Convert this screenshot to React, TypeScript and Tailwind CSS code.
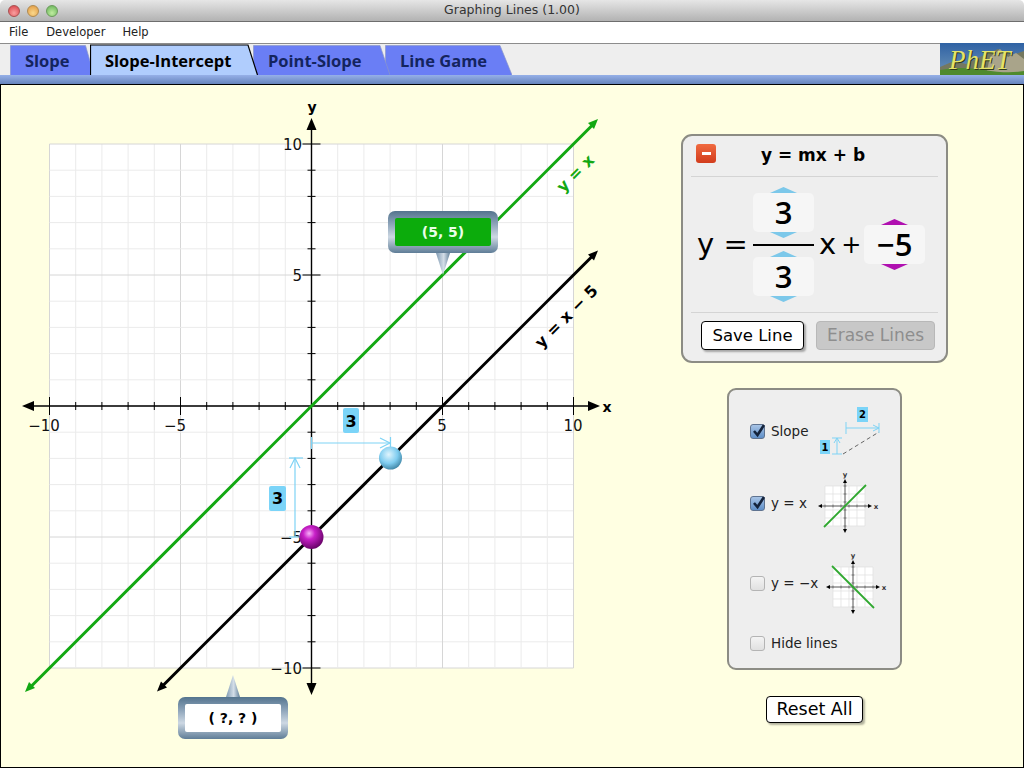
import React from 'react';

const units = Array.from({ length: 21 }, (_, i) => i - 10);
const px = (v: number) => 311.5 + v * 26.2;
const py = (v: number) => 406 - v * 26.2;

function Tab({ label, width, path, active, className }: { label: string; width: number; path: string; active?: boolean; className: string }) {
  return (
    <div className={`relative h-[31px] shrink-0 ${className}`} style={{ width }}>
      <svg className="absolute inset-0" width={width} height={31}>
        <path d={path} fill={active ? '#b0cdfd' : '#6a7ef5'} stroke={active ? '#000' : '#8a96c8'} strokeWidth={active ? 1.2 : 0.7} />
      </svg>
      <span className={`relative block pl-[15px] pt-[7px] text-[16.5px] leading-[20px] font-bold whitespace-nowrap font-['Open_Sans',sans-serif] ${active ? 'text-black' : 'text-[#14245e]'}`}>
        {label}
      </span>
    </div>
  );
}

function PhetLogo() {
  return (
    <svg width={84} height={32} className="shrink-0 -mt-[1px]">
      <defs>
        <linearGradient id="sky" x1="0" y1="0" x2="0" y2="1">
          <stop offset="0" stopColor="#2f62a4" />
          <stop offset="1" stopColor="#6d94b8" />
        </linearGradient>
      </defs>
      <rect width={84} height={32} fill="url(#sky)" />
      <path d="M0 24L14 18L26 21L44 12L58 6L72 12L84 8V32H0Z" fill="#75785f" />
      <path d="M50 14L60 6L68 14L76 10L84 16V32H46Z" fill="#a9a48a" />
      <path d="M0 27Q20 23 44 27T84 28V32H0Z" fill="#4f8a2d" />
      <text x={10} y={27} fontFamily="Liberation Serif" fontStyle="italic" fontSize={27} fill="#2e3a18">PhET</text>
      <text x={9} y={26} fontFamily="Liberation Serif" fontStyle="italic" fontSize={27} fill="#e4e468">PhET</text>
    </svg>
  );
}

function Graph() {
  return (
    <svg width={640} height={683} viewBox="1 85 640 683" className="block">
      <defs>
        <radialGradient id="magenta" cx="0.4" cy="0.35" r="0.7">
          <stop offset="0" stopColor="#f8b0f8" />
          <stop offset="0.35" stopColor="#c820c8" />
          <stop offset="1" stopColor="#600060" />
        </radialGradient>
        <radialGradient id="blue" cx="0.42" cy="0.35" r="0.7">
          <stop offset="0" stopColor="#dff4fd" />
          <stop offset="0.55" stopColor="#80cdf0" />
          <stop offset="1" stopColor="#3a7f9f" />
        </radialGradient>
      </defs>
      <rect x={49.5} y={144} width={524} height={524} fill="#fff" />
      {units.map((v) => (
        <g key={v} stroke={v % 5 === 0 ? '#d6d6d6' : '#ebebeb'} strokeWidth={1}>
          <line x1={px(v)} y1={144} x2={px(v)} y2={668} />
          <line x1={49.5} y1={py(v)} x2={573.5} y2={py(v)} />
        </g>
      ))}

      {/* axes */}
      <g stroke="#000" strokeWidth={1.4}>
        <line x1={30} y1={406} x2={592} y2={406} />
        <line x1={311.5} y1={126} x2={311.5} y2={688} />
        {units.filter((v) => v !== 0).map((v) => {
          const len = v % 5 === 0 ? 9 : 4;
          return (
            <g key={v} strokeWidth={1}>
              <line x1={px(v)} y1={406 - len} x2={px(v)} y2={406 + len} />
              <line x1={311.5 - len} y1={py(v)} x2={311.5 + len} y2={py(v)} />
            </g>
          );
        })}
      </g>
      <polygon points="22,406 34,401 34,411" />
      <polygon points="600,406 588,401 588,411" />
      <polygon points="311.5,118 306.5,130 316.5,130" />
      <polygon points="311.5,695 306.5,683 316.5,683" />
      <g fontSize={15} fill="#111">
        <text x={44} y={431} textAnchor="middle">−10</text>
        <text x={175} y={431} textAnchor="middle">−5</text>
        <text x={442} y={431} textAnchor="middle">5</text>
        <text x={573} y={431} textAnchor="middle">10</text>
        <text x={302} y={150} textAnchor="end">10</text>
        <text x={302} y={281} textAnchor="end">5</text>
        <text x={302} y={543} textAnchor="end">−5</text>
        <text x={302} y={674} textAnchor="end">−10</text>
      </g>
      <text x={607} y={412} textAnchor="middle" fontSize={14} fontWeight="bold">x</text>
      <text x={312} y={112} textAnchor="middle" fontSize={14} fontWeight="bold">y</text>

      {/* lines */}
      <line x1={30} y1={687.5} x2={593} y2={124.5} stroke="#12a812" strokeWidth={3} />
      <polygon points="598,119 588,123 594,129" fill="#12a812" />
      <polygon points="25,692 35,688 29,682" fill="#12a812" />
      <line x1={162} y1={686.5} x2={593} y2={255.5} stroke="#000" strokeWidth={3} />
      <polygon points="598,250.5 588,254.5 594,260.5" />
      <polygon points="157,691.5 167,687.5 161,681.5" />
      <text x={575} y={179} textAnchor="middle" fontSize={16} fontWeight="bold" fill="#12a812" transform="rotate(-45 575 173)">y = x</text>
      <text x={566} y={322} textAnchor="middle" fontSize={16} fontWeight="bold" transform="rotate(-45 566 316)">y = x − 5</text>

      {/* slope indicators */}
      <g stroke="#7ed3f5" strokeWidth={1.2} fill="none">
        <line x1={311.5} y1={437} x2={311.5} y2={449} />
        <line x1={311.5} y1={443} x2={390} y2={443} />
        <line x1={390.5} y1={437} x2={390.5} y2={449} />
        <path d="M380 438L390 443L380 448" />
        <line x1={295} y1={458} x2={295} y2={537} />
        <line x1={289} y1={458} x2={303} y2={458} />
        <line x1={289} y1={537} x2={303} y2={537} />
        <path d="M290 468L295 458L300 468" />
      </g>
      <rect x={343} y={408} width={16} height={25} rx={2} fill="#7bd4f8" />
      <rect x={269} y={486} width={17} height={25} rx={2} fill="#7bd4f8" />
      <text x={351} y={427} textAnchor="middle" fontSize={16} fontWeight="bold">3</text>
      <text x={277.5} y={504} textAnchor="middle" fontSize={16} fontWeight="bold">3</text>

      <circle cx={390.5} cy={458} r={11.5} fill="url(#blue)" />
      <circle cx={311.5} cy={537} r={12} fill="url(#magenta)" />
    </svg>
  );
}

function Bubble({ label, green, up, className }: { label: string; green?: boolean; up?: boolean; className: string }) {
  return (
    <div className={`absolute w-[110px] ${className}`}>
      {up && <Pointer up />}
      <div className="h-[42px] rounded-[7px] p-[7px] bg-[linear-gradient(180deg,#54748e_0%,#8ba2b8_30%,#cdd8e3_62%,#5f7d97_100%)]">
        <div className={`h-full flex items-center justify-center rounded-[2px] text-[14px] font-bold ${green ? 'bg-[#0cac0c] text-[#eaffea]' : 'bg-white text-black'}`}>
          {label}
        </div>
      </div>
      {!up && <Pointer />}
    </div>
  );
}

function Pointer({ up }: { up?: boolean }) {
  return (
    <svg width={14} height={22} viewBox="0 0 14 22" className="block mx-auto">
      <defs>
        <linearGradient id={up ? 'ptrUp' : 'ptrDown'} x1="0" y1="0" x2="1" y2="0">
          <stop offset="0" stopColor="#7f9ab2" />
          <stop offset="0.55" stopColor="#d4dee8" />
          <stop offset="1" stopColor="#62809a" />
        </linearGradient>
      </defs>
      <polygon points={up ? '7,0 0,22 14,22' : '0,0 14,0 7,22'} fill={`url(#${up ? 'ptrUp' : 'ptrDown'})`} />
    </svg>
  );
}

function Chevron({ color, down }: { color: string; down?: boolean }) {
  return (
    <svg width={27} height={6} viewBox="0 0 27 6" className="block mx-auto">
      <polygon points={down ? '0,0 27,0 13.5,6' : '0,6 27,6 13.5,0'} fill={color} />
    </svg>
  );
}

function Spinner({ value, color }: { value: string; color: string }) {
  return (
    <div className="w-[61px]">
      <Chevron color={color} />
      <div className="h-[39px] rounded-[5px] bg-[#f6f6f6] flex items-center justify-center text-[31px] font-semibold leading-none text-black font-['Open_Sans',sans-serif]">
        {value}
      </div>
      <Chevron color={color} down />
    </div>
  );
}

function Check({ checked }: { checked?: boolean }) {
  if (!checked) {
    return <div className="w-[15px] h-[15px] shrink-0 rounded-[3px] border border-[#b4b4b4] bg-[linear-gradient(180deg,#f4f4f4,#e0e0e0)]" />;
  }
  return (
    <div className="relative w-[15px] h-[15px] shrink-0 rounded-[3px] border border-[#5f7390] bg-[linear-gradient(180deg,#a8c4e6,#5f8fc8)]">
      <svg width={17} height={17} viewBox="0 0 17 17" className="absolute left-0 -top-[3px]">
        <path d="M3 9L6.5 13L13 3" fill="none" stroke="#14233c" strokeWidth={2.6} />
      </svg>
    </div>
  );
}

function SlopeIcon() {
  return (
    <svg width={62} height={50} viewBox="820 405 62 50" className="block">
      <g stroke="#7ed3f5" strokeWidth={1} fill="none">
        <line x1={846} y1={427} x2={879} y2={427} />
        <line x1={846} y1={421} x2={846} y2={433} />
        <line x1={879} y1={422} x2={879} y2={432} />
        <path d="M873 424L879 427L873 430" />
        <line x1={837} y1={437} x2={837} y2={453} />
        <line x1={832} y1={437} x2={842} y2={437} />
        <line x1={832} y1={453} x2={842} y2={453} />
        <path d="M834 442L837 437L840 442" />
      </g>
      <line x1={843} y1={453} x2={879} y2={431} stroke="#666" strokeWidth={1} strokeDasharray="4 3" />
      <rect x={857} y={406} width={11} height={15} fill="#7bd4f8" />
      <rect x={820} y={439} width={10} height={14} fill="#7bd4f8" />
      <text x={862.5} y={417} textAnchor="middle" fontSize={10} fontWeight="bold">2</text>
      <text x={825} y={450} textAnchor="middle" fontSize={10} fontWeight="bold">1</text>
    </svg>
  );
}

function MiniGraph({ falling }: { falling?: boolean }) {
  const ticks = [0, 8, 16, 24, 32, 40];
  return (
    <svg width={72} height={72} viewBox="-36 -36 72 72" className="block">
      <rect x={-20} y={-20} width={40} height={40} fill="#fff" />
      {ticks.map((t) => (
        <g key={t}>
          <g stroke="#dedede" strokeWidth={0.7}>
            <line x1={t - 20} y1={-20} x2={t - 20} y2={20} />
            <line x1={-20} y1={t - 20} x2={20} y2={t - 20} />
          </g>
          <g stroke="#666" strokeWidth={0.7}>
            <line x1={t - 20} y1={-1.5} x2={t - 20} y2={1.5} />
            <line x1={-1.5} y1={t - 20} x2={1.5} y2={t - 20} />
          </g>
        </g>
      ))}
      <line x1={-25} y1={0} x2={25} y2={0} stroke="#555" strokeWidth={1} />
      <line x1={0} y1={-25} x2={0} y2={25} stroke="#555" strokeWidth={1} />
      <polygon points="-27,0 -23,-2 -23,2" />
      <polygon points="27,0 23,-2 23,2" />
      <polygon points="0,-27 -2,-23 2,-23" />
      <polygon points="0,27 -2,23 2,23" />
      <text x={31} y={3} fontSize={7} fontWeight="bold" fill="#333" textAnchor="middle">x</text>
      <text x={0} y={-29} fontSize={7} fontWeight="bold" fill="#333" textAnchor="middle">y</text>
      {falling ? (
        <line x1={-21} y1={-21} x2={21} y2={21} stroke="#2fa82f" strokeWidth={1.8} />
      ) : (
        <line x1={-21} y1={21} x2={21} y2={-21} stroke="#2fa82f" strokeWidth={1.8} />
      )}
    </svg>
  );
}

function PushButton({ label, className }: { label: string; className: string }) {
  return (
    <div className={`flex items-center justify-center rounded-[4px] bg-white border border-black text-black shadow-[2px_2px_2px_rgba(0,0,0,0.3)] ${className}`}>
      {label}
    </div>
  );
}

export default function App() {
  return (
    <div className="w-[1024px] h-[768px] flex flex-col overflow-hidden bg-white text-black font-['DejaVu_Sans',sans-serif]">
      {/* title bar */}
      <div className="relative h-[22px] shrink-0 rounded-t-[5px] border-b border-[#6e6e6e] bg-[linear-gradient(180deg,#e6e6e6,#b2b2b2)] flex items-center justify-center">
        <div className="absolute left-[8px] top-[5px] flex gap-[7px]">
          <div className="w-[12px] h-[12px] rounded-full border border-[#a85050] bg-[radial-gradient(circle_at_50%_70%,#f8a0a0,#d83c44)]" />
          <div className="w-[12px] h-[12px] rounded-full border border-[#b08a50] bg-[radial-gradient(circle_at_50%_70%,#fad88c,#e0963c)]" />
          <div className="w-[12px] h-[12px] rounded-full border border-[#6a9a5a] bg-[radial-gradient(circle_at_50%_70%,#c0eca0,#62b054)]" />
        </div>
        <span className="text-[12.5px] text-[#333]">Graphing Lines (1.00)</span>
      </div>

      {/* menu bar */}
      <div className="h-[22px] shrink-0 border-b border-[#8c8c8c] bg-white flex items-center pl-[9px] text-[11.5px] text-[#222]">
        <span>File</span>
        <span className="ml-[18px]">Developer</span>
        <span className="ml-[17px]">Help</span>
      </div>

      {/* tabs */}
      <div className="h-[31px] shrink-0 bg-[#eeeeee] flex justify-between pl-[10px]">
        <div className="flex">
          <Tab label="Slope" width={84} className="z-0" path="M0.5 31V1.5H75.5L84 31" />
          <Tab label="Slope-Intercept" width={168} active className="z-10 -ml-[4px]" path="M0.5 31V1H158L167.5 31" />
          <Tab label="Point-Slope" width={137} className="z-[1] -ml-[5px]" path="M0.5 31V1.5H127L137 31" />
          <Tab label="Line Game" width={127} className="z-0 -ml-[5px]" path="M0.5 31V1.5H115L127 31" />
        </div>
        <PhetLogo />
      </div>
      <div className="h-[9px] shrink-0 bg-[linear-gradient(180deg,#96b0e8,#6684bc)]" />

      {/* play area */}
      <div className="flex-1 flex min-h-0 border border-black bg-[#ffffe2]">
        <div className="relative w-[640px] shrink-0">
          <Graph />
          <Bubble label="(5, 5)" green className="left-[387px] top-[126px]" />
          <Bubble label="( ?, ? )" up className="left-[177px] top-[590px]" />
        </div>

        <div className="w-[267px] ml-[40px] pt-[49px] flex flex-col items-center">
          {/* equation panel */}
          <div className="w-[267px] h-[229px] rounded-[11px] border-2 border-[#8c8c84] bg-[#eeeeee] px-[8px] flex flex-col">
            <div className="relative h-[41px] shrink-0 border-b border-[#d4d4d4] flex items-center justify-center">
              <div className="absolute left-[5px] top-[8px] w-[20px] h-[19px] rounded-[3px] bg-[linear-gradient(180deg,#f06a40,#d23c1c)] flex items-center justify-center">
                <div className="w-[9px] h-[3px] bg-white" />
              </div>
              <span className="text-[17px] font-bold pr-[3px]">y = mx + b</span>
            </div>
            <div className="h-[136px] shrink-0 border-b border-[#d4d4d4] flex items-center pl-[6px] text-[29px] leading-none">
              <span className="w-[56px] whitespace-nowrap">y =</span>
              <div className="flex flex-col">
                <Spinner value="3" color="#7cc8ea" />
                <div className="h-[2px] mt-[6px] mb-[5px] bg-black" />
                <Spinner value="3" color="#7cc8ea" />
              </div>
              <span className="ml-[5px]">x</span>
              <span className="ml-[5px] text-[24px]">+</span>
              <div className="ml-[3px]">
                <Spinner value="−5" color="#b010b0" />
              </div>
            </div>
            <div className="flex items-start justify-between pt-[8px] pl-[10px] pr-[3px]">
              <PushButton label="Save Line" className="w-[103px] h-[29px] text-[16.5px] pt-[1px]" />
              <div className="w-[119px] h-[29px] pt-[1px] rounded-[4px] border border-[#b8b8b8] bg-[#c8c8c8] text-[#8e8e8e] text-[17px] flex items-center justify-center">
                Erase Lines
              </div>
            </div>
          </div>

          {/* visibility panel */}
          <div className="mt-[25px] w-[175px] h-[282px] rounded-[9px] border-2 border-[#8c8c84] bg-[#eeeeee] pl-[21px] text-[13.5px] text-[#222] flex flex-col">
            <div className="mt-[14px] h-[54px] flex items-center">
              <Check checked />
              <span className="ml-[6px]">Slope</span>
              <div className="ml-[12px]">
                <SlopeIcon />
              </div>
            </div>
            <div className="mt-[12px] h-[66px] flex items-center">
              <Check checked />
              <span className="ml-[6px] whitespace-nowrap">y = x</span>
              <div className="ml-[2px] self-start">
                <MiniGraph />
              </div>
            </div>
            <div className="mt-[14px] h-[66px] flex items-center">
              <Check />
              <span className="ml-[6px] whitespace-nowrap">y = −x</span>
              <div className="-ml-[1px] self-start mt-[1px]">
                <MiniGraph falling />
              </div>
            </div>
            <div className="mt-[17px] h-[20px] flex items-center">
              <Check />
              <span className="ml-[6px]">Hide lines</span>
            </div>
          </div>

          <PushButton label="Reset All" className="mt-[26px] w-[97px] h-[27px] text-[17.5px]" />
        </div>
      </div>
    </div>
  );
}
